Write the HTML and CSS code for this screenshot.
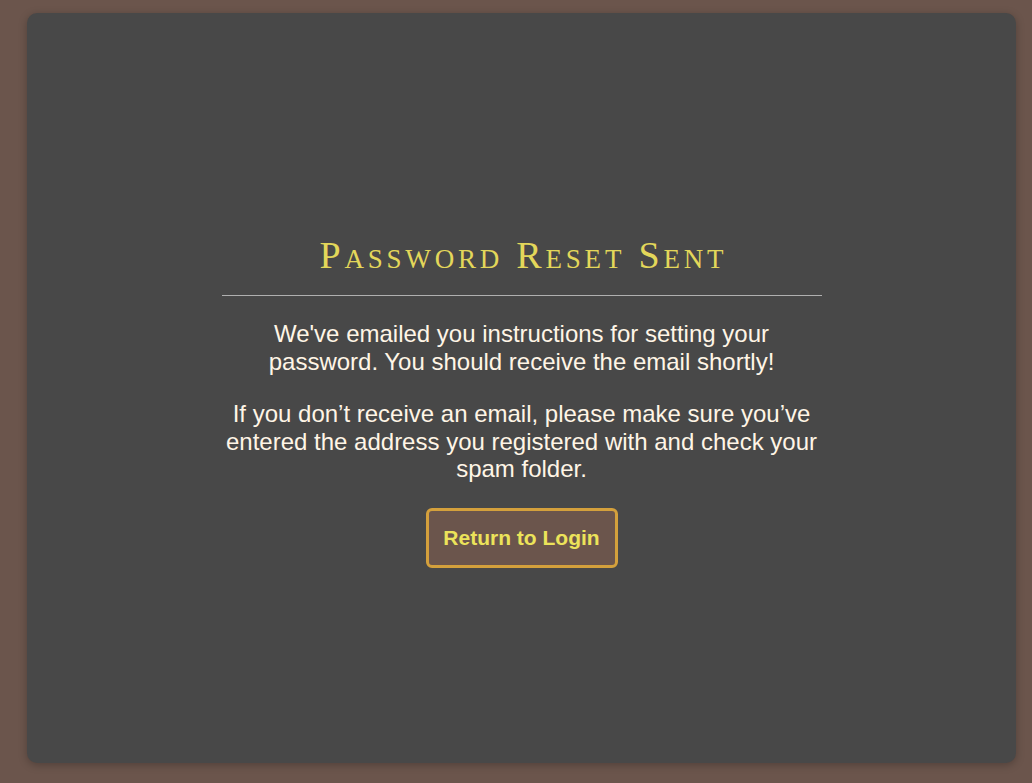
FILE: index.html
```html
<!DOCTYPE html>
<html lang="en">
<head>
<meta charset="utf-8">
<title>Password Reset Sent</title>
<link rel="stylesheet" href="styles.css">
</head>
<body>
<main class="card">
  <section class="content">
    <h1 class="title">Password Reset Sent</h1>
    <hr class="rule">
    <p class="msg">We've emailed you instructions for setting your password. You should receive the email shortly!</p>
    <p class="msg">If you don’t receive an email, please make sure you’ve entered the address you registered with and check your spam folder.</p>
    <a class="btn" href="#">Return to Login</a>
  </section>
</main>
</body>
</html>
```
FILE: styles.css
```css
html, body {
  margin: 0;
  height: 100%;
}
body {
  background: #6b554c;
  box-sizing: border-box;
  padding: 13px 16px 20px 27px;
  font-family: "Liberation Sans", Arial, sans-serif;
}
.card {
  box-sizing: border-box;
  height: 100%;
  background: #484848;
  border-radius: 10px;
  box-shadow: 0 2px 8px rgba(0,0,0,0.25);
  display: flex;
  align-items: center;
  justify-content: center;
}
.content {
  width: 600px;
  display: flex;
  flex-direction: column;
  align-items: center;
  text-align: center;
  margin-top: 23px;
}
.title {
  margin: 0;
  font-family: "Liberation Serif", serif;
  font-variant: small-caps;
  font-weight: normal;
  font-size: 38px;
  letter-spacing: 3.8px;
  text-indent: 3.8px;
  color: #e3d75a;
  line-height: 48px;
}
.rule {
  width: 100%;
  margin: 16px 0 24px;
  border: 0;
  height: 1px;
  background: #b0b0b0;
}
.msg {
  width: 600px;
  margin: 0 0 25px;
  font-size: 24px;
  line-height: 27.6px;
  color: #fff5e6;
}
.btn {
  margin-top: 0;
  box-sizing: border-box;
  width: 192px;
  height: 60px;
  display: flex;
  align-items: center;
  justify-content: center;
  border: 3px solid #d4a03c;
  border-radius: 6px;
  background: #6b554c;
  color: #ece35a;
  font-weight: bold;
  font-size: 21px;
  text-decoration: none;
}
```
